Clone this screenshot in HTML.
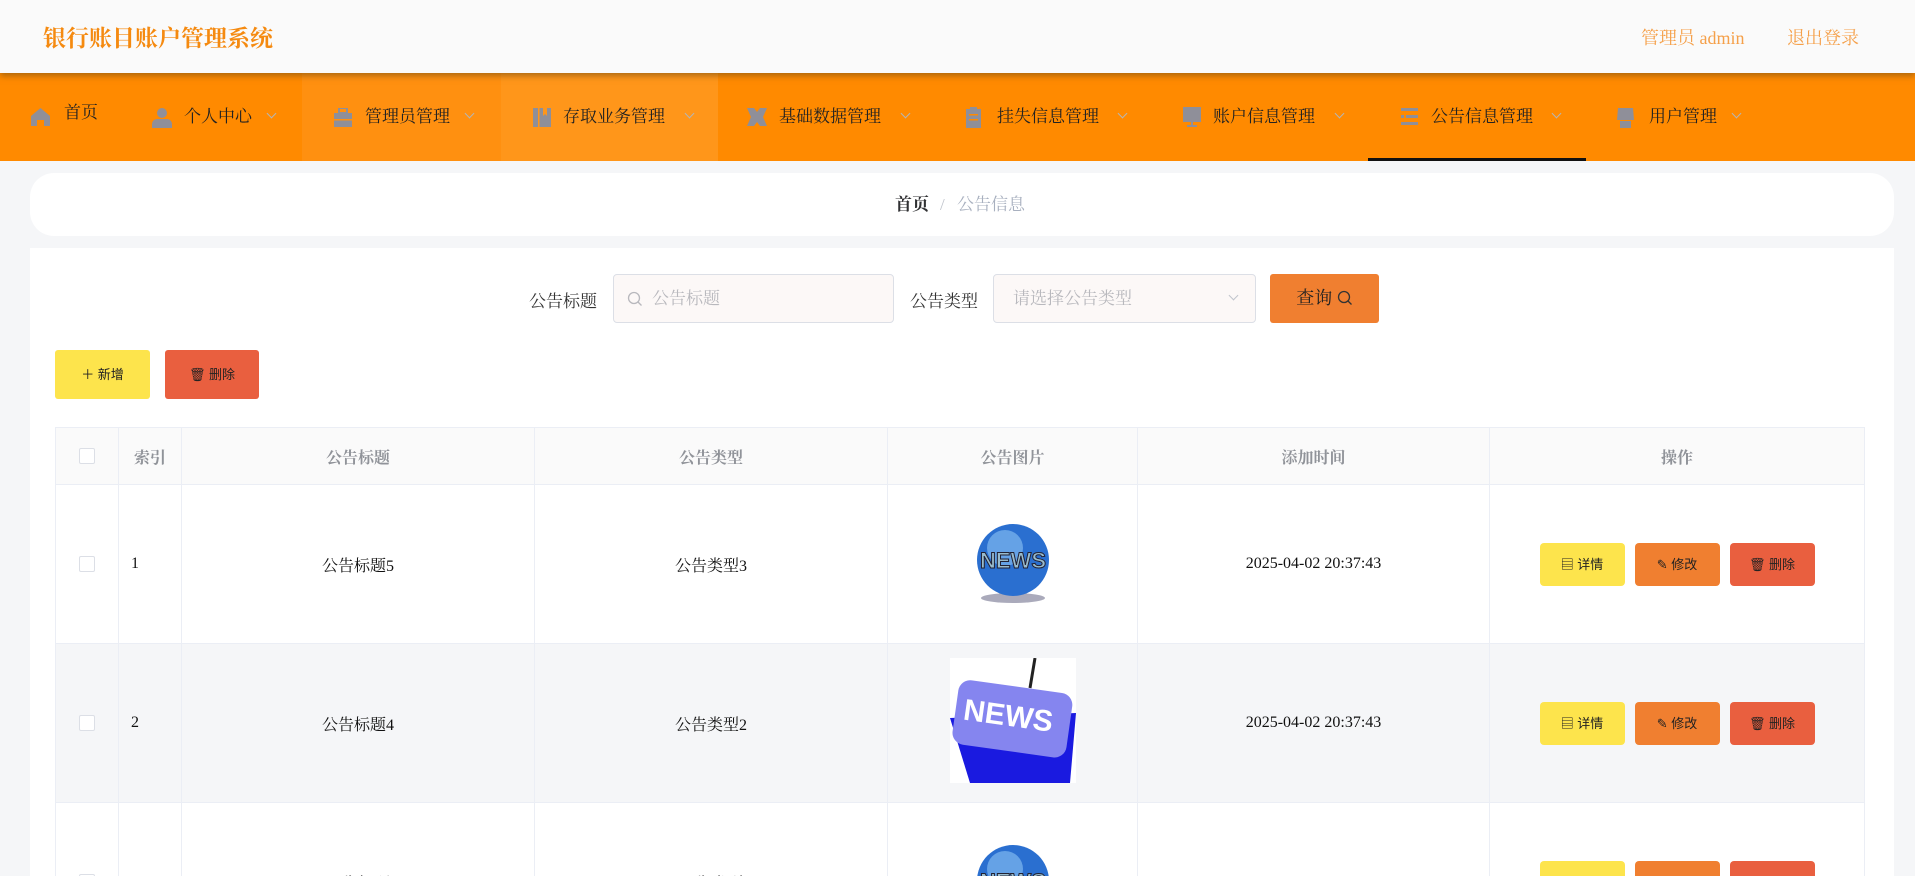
<!DOCTYPE html>
<html><head><meta charset="utf-8">
<style>
*{box-sizing:border-box;margin:0;padding:0}
html,body{width:1915px;height:876px;overflow:hidden}
body{background:#f5f6f8;font-family:"Liberation Serif","Noto Serif CJK SC",serif}
#w{position:relative;width:1915px;height:876px;overflow:hidden}
.hdr{position:absolute;left:0;top:0;width:1915px;height:73px;background:#fafafa;box-shadow:0 3px 6px rgba(120,80,20,.6);z-index:2}
.title{position:absolute;left:43px;top:20px;font-size:23px;color:#f58a10;font-weight:bold}
.hr{position:absolute;top:24px;font-size:18px;color:#f5a04a}
.nav{position:absolute;left:0;top:73px;width:1915px;height:88px;background:#ff8a00}
.seg{position:absolute;top:0;height:88px}
.ni{position:absolute;top:0;height:88px;line-height:88px;font-size:17px;color:#222;font-family:"Liberation Serif","Noto Serif CJK SC",serif;white-space:nowrap}
.ni svg{position:absolute;top:35px}
.chev{position:absolute;top:37px;width:7px;height:7px;border-right:1px solid #b5b5b5;border-bottom:1px solid #b5b5b5;transform:rotate(45deg)}
.ul{position:absolute;left:1368px;top:158px;width:218px;height:3px;background:#111}
.bc{position:absolute;left:30px;top:173px;width:1864px;height:63px;background:#fff;border-radius:24px;font-size:17px;line-height:63px}
.main{position:absolute;left:30px;top:248px;width:1864px;height:628px;background:#fff}
.lbl{position:absolute;font-size:17px;color:#333;top:287px}
.inp{position:absolute;top:274px;height:49px;border:1px solid #dcdfe6;border-radius:4px;background:#fcf8f7;color:#b8b8bd;font-size:17px;line-height:47px}
.btn{position:absolute;border-radius:3px;font-family:"Liberation Sans","Noto Sans CJK SC",sans-serif;color:#222;text-align:center}
.tw{position:absolute;left:55px;top:427px;width:1810px;height:449px;overflow:hidden}
table{width:1810px;border-collapse:collapse;font-size:16px}
td,th{border:1px solid #ebeef5;text-align:center;color:#111;font-weight:normal}
th{height:57px;background:#fafafa;color:#909399;font-weight:bold}
.r td{height:159px}
.g td{background:#f5f6f8}
.cb{display:inline-block;width:16px;height:16px;border:1px solid #dcdfe6;border-radius:2px;background:#fff;vertical-align:middle}
.ab{display:inline-block;width:85px;height:43px;line-height:43px;border-radius:4px;font-size:13px;font-family:"Liberation Sans","Noto Sans CJK SC",sans-serif;margin:0 5px;color:#222}
</style></head><body><div id="w">
<div class="hdr">
<div class="title">银行账目账户管理系统</div>
<div class="hr" style="left:1641px">管理员 admin</div>
<div class="hr" style="left:1787px">退出登录</div>
</div>
<div class="nav">
<div class="seg" style="left:302px;width:199px;background:#ff9010"></div>
<div class="seg" style="left:501px;width:217px;background:#ff961a"></div>
<div class="ni" style="left:31px"><svg width="19" height="18" viewBox="0 0 19 18" style="left:0"><path d="M9.5 0L0 8v10h6v-6h7v6h6V8z" fill="#8f8f99"/></svg><span style="position:absolute;left:33px;top:-4px">首页</span></div>
<div class="ni" style="left:152px"><svg width="20" height="20" viewBox="0 0 20 20" style="left:0"><circle cx="10" cy="5" r="5" fill="#8f8f99"/><path d="M0 20v-4a5 5 0 015-5h10a5 5 0 015 5v4z" fill="#8f8f99"/></svg><span style="position:absolute;left:32px">个人中心</span><i class="chev" style="left:116px"></i></div>
<div class="ni" style="left:334px"><svg width="18" height="19" viewBox="0 0 18 19" style="left:0"><rect x="5" y="0" width="8" height="5" fill="none" stroke="#8f8f99" stroke-width="2"/><rect x="0" y="5" width="18" height="14" fill="#8f8f99"/><rect x="0" y="11" width="18" height="1.5" fill="#ff9010"/></svg><span style="position:absolute;left:31px">管理员管理</span><i class="chev" style="left:132px"></i></div>
<div class="ni" style="left:533px"><svg width="18" height="19" viewBox="0 0 18 19" style="left:0"><rect x="0" y="0" width="18" height="19" fill="#8f8f99"/><rect x="5" y="0" width="1.5" height="19" fill="#ff961a"/><path d="M10 0v8l2-2 2 2V0" fill="#ff961a"/></svg><span style="position:absolute;left:30px">存取业务管理</span><i class="chev" style="left:153px"></i></div>
<div class="ni" style="left:747px"><svg width="20" height="18" viewBox="0 0 20 18" style="left:0"><path d="M0 0h7l3 4 3-4h7l-4 9 4 9h-7l-3-4-3 4H0l4-9z" fill="#8f8f99"/></svg><span style="position:absolute;left:32px">基础数据管理</span><i class="chev" style="left:155px"></i></div>
<div class="ni" style="left:966px"><svg width="15" height="21" viewBox="0 0 15 21" style="left:0;top:34px"><rect x="4" y="0" width="7" height="3" fill="#8f8f99"/><rect x="0" y="2" width="15" height="19" fill="#8f8f99"/><rect x="3" y="7" width="9" height="1.5" fill="#ff8a00"/><rect x="3" y="12" width="9" height="1.5" fill="#ff8a00"/></svg><span style="position:absolute;left:31px">挂失信息管理</span><i class="chev" style="left:153px"></i></div>
<div class="ni" style="left:1183px"><svg width="18" height="21" viewBox="0 0 18 21" style="left:0;top:34px"><rect x="0" y="0" width="18" height="15" fill="#8f8f99"/><rect x="8" y="15" width="2" height="3" fill="#8f8f99"/><rect x="4" y="18" width="10" height="2" fill="#8f8f99"/></svg><span style="position:absolute;left:30px">账户信息管理</span><i class="chev" style="left:153px"></i></div>
<div class="ni" style="left:1401px"><svg width="17" height="17" viewBox="0 0 17 17" style="left:0"><rect x="0" y="0" width="17" height="3" fill="#8f8f99"/><rect x="0" y="7" width="3" height="3" fill="#8f8f99"/><rect x="5" y="7" width="12" height="3" fill="#8f8f99"/><rect x="0" y="14" width="17" height="3" fill="#8f8f99"/></svg><span style="position:absolute;left:30px">公告信息管理</span><i class="chev" style="left:152px"></i></div>
<div class="ni" style="left:1617px"><svg width="17" height="20" viewBox="0 0 17 20" style="left:0"><path d="M1 0h15l1 12H0z" fill="#8f8f99"/><rect x="3" y="13" width="11" height="7" fill="#8f8f99"/></svg><span style="position:absolute;left:32px">用户管理</span><i class="chev" style="left:116px"></i></div>
</div>
<div class="ul"></div>
<div class="bc"><span style="position:absolute;left:865px;font-weight:bold;color:#303133">首页</span><span style="position:absolute;left:910px;color:#c0c4cc">/</span><span style="position:absolute;left:927px;color:#a8b0bf">公告信息</span></div>
<div class="main"></div>
<div class="lbl" style="left:529px">公告标题</div>
<div class="inp" style="left:613px;width:281px"><svg width="16" height="16" viewBox="0 0 16 16" style="position:absolute;left:13px;top:16px"><circle cx="7" cy="7" r="5.5" fill="none" stroke="#b8b8bd" stroke-width="1.3"/><path d="M11 11l3.5 3.5" stroke="#b8b8bd" stroke-width="1.3"/></svg><span style="position:absolute;left:38px">公告标题</span></div>
<div class="lbl" style="left:910px">公告类型</div>
<div class="inp" style="left:993px;width:263px"><span style="position:absolute;left:19px">请选择公告类型</span><i class="chev" style="left:236px;top:17px;border-color:#c0c4cc"></i></div>
<div class="btn" style="left:1270px;top:274px;width:109px;height:49px;line-height:49px;background:#f07f30;font-size:18px;font-family:'Liberation Serif','Noto Serif CJK SC',serif">查询 <svg width="16" height="16" viewBox="0 0 16 16" style="vertical-align:-2px"><circle cx="7" cy="7" r="5.5" fill="none" stroke="#333" stroke-width="1.3"/><path d="M11 11l3.5 3.5" stroke="#333" stroke-width="1.3"/></svg></div>
<div class="btn" style="left:55px;top:350px;width:95px;height:49px;line-height:49px;background:#fde44c;font-size:13px">＋ 新增</div>
<div class="btn" style="left:165px;top:350px;width:94px;height:49px;line-height:49px;background:#e95f3f;font-size:13px">🗑 删除</div>
<div class="tw"><table>
<tr><th style="width:63px"><span class="cb"></span></th><th style="width:63px">索引</th><th style="width:353px">公告标题</th><th style="width:353px">公告类型</th><th style="width:250px">公告图片</th><th style="width:352px">添加时间</th><th>操作</th></tr>
<tr class="r"><td><span class="cb"></span></td><td style="text-align:left;padding-left:12px">1</td><td>公告标题5</td><td>公告类型3</td><td>
<svg width="80" height="84" viewBox="0 0 80 84"><ellipse cx="40" cy="78" rx="32" ry="5" fill="#aab"/><circle cx="40" cy="40" r="36" fill="#2a6fd0"/><circle cx="32" cy="28" r="18" fill="#7fb8f0" opacity=".7"/><text x="40" y="48" font-family="Liberation Sans" font-weight="bold" font-size="22" fill="#9bc" stroke="#223" stroke-width="1" text-anchor="middle">NEWS</text></svg></td><td>2025-04-02 20:37:43</td><td><span class="ab" style="background:#fde44c">▤ 详情</span><span class="ab" style="background:#f07f30">✎ 修改</span><span class="ab" style="background:#e95f3f">🗑 删除</span></td></tr>
<tr class="r g"><td><span class="cb"></span></td><td style="text-align:left;padding-left:12px">2</td><td>公告标题4</td><td>公告类型2</td><td>
<svg width="126" height="125" viewBox="0 0 126 125"><rect width="126" height="125" fill="#fff"/><path d="M85 0l-5 30" stroke="#222" stroke-width="3"/><path d="M0 60l20 65h100l6-70z" fill="#1a1ae0"/><rect x="5" y="28" width="115" height="65" rx="12" fill="#8585ef" transform="rotate(8 60 60)"/><text x="58" y="68" font-family="Liberation Sans" font-weight="bold" font-size="30" fill="#fff" text-anchor="middle" transform="rotate(8 60 60)">NEWS</text></svg></td><td>2025-04-02 20:37:43</td><td><span class="ab" style="background:#fde44c">▤ 详情</span><span class="ab" style="background:#f07f30">✎ 修改</span><span class="ab" style="background:#e95f3f">🗑 删除</span></td></tr>
<tr class="r"><td><span class="cb"></span></td><td></td><td>公告标题</td><td>公告类型</td><td style="vertical-align:top;padding-top:38px"><svg width="80" height="84" viewBox="0 0 80 84"><circle cx="40" cy="40" r="36" fill="#2a6fd0"/><circle cx="32" cy="28" r="18" fill="#7fb8f0" opacity=".7"/><text x="40" y="48" font-family="Liberation Sans" font-weight="bold" font-size="22" fill="#9bc" stroke="#223" stroke-width="1" text-anchor="middle">NEWS</text></svg></td><td></td><td style="vertical-align:top;padding-top:58px"><span class="ab" style="background:#fde44c"></span><span class="ab" style="background:#f07f30"></span><span class="ab" style="background:#e95f3f"></span></td></tr>
</table></div>
</div></body></html>
